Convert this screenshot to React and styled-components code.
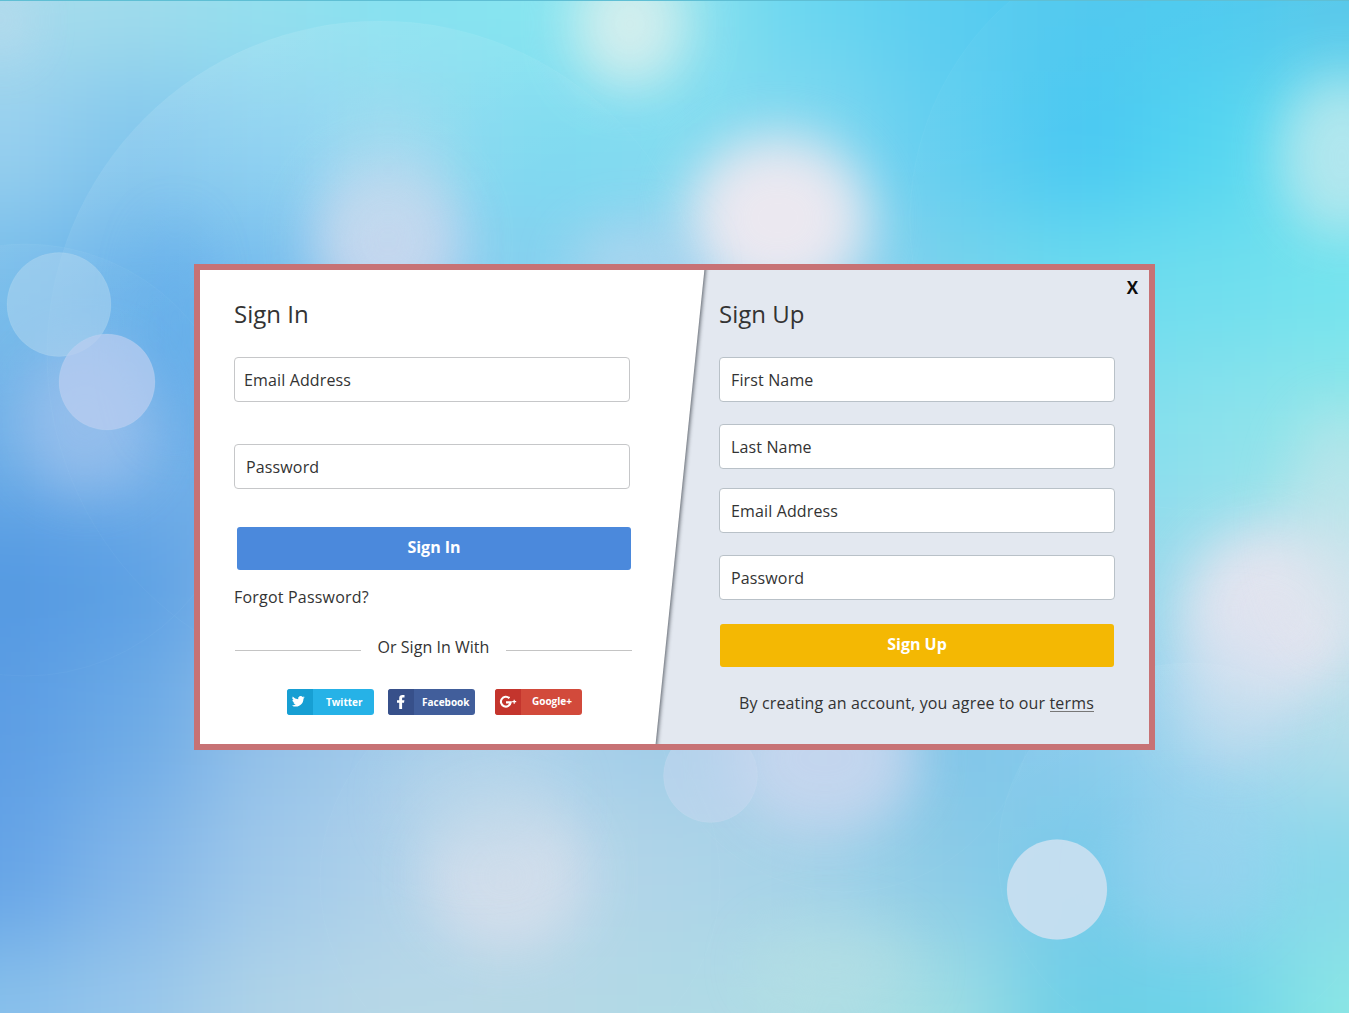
import React from "react";
import styled, { createGlobalStyle } from "styled-components";

const GlobalStyle = createGlobalStyle`
  * { box-sizing: border-box; }
  body {
    margin: 0;
    font-family: "Open Sans", "Noto Sans", sans-serif;
    font-size: 16px;
    line-height: 22px;
    color: #333;
  }
`;

const Page = styled.main`
  position: relative;
  height: 1013px;
  padding: 264px 0 0 194px;
  overflow: hidden;
  background: #8cccec;
`;

const Backdrop = styled.svg`
  position: absolute;
  left: 0;
  top: 0;
  width: 1349px;
  height: 1013px;
`;

const Card = styled.section`
  position: relative;
  display: flex;
  width: 961px;
  height: 486px;
  border: 6px solid #c77275;
  background: #e3e8f0;
  overflow: hidden;
`;

const SignInPane = styled.form`
  position: relative;
  display: flex;
  flex-direction: column;
  width: 505px;
  padding: 28px 73px 0 34px;
`;

const SlantShadow = styled.div`
  position: absolute;
  inset: 0;
  filter: drop-shadow(1px 0 2px rgba(38, 44, 52, 0.8));

  &::before {
    content: "";
    position: absolute;
    inset: -6px 0 -6px -6px;
    background: #fff;
    clip-path: polygon(0 0, 100% 0, 461px 100%, 0 100%);
  }
`;

const SignUpPane = styled.form`
  position: relative;
  display: flex;
  flex-direction: column;
  width: 444px;
  padding: 28px 34px 0 14px;
`;

const Title = styled.h1`
  position: relative;
  margin: 0 0 27px;
  font-size: 24px;
  font-weight: 400;
  line-height: 32px;
`;

const Field = styled.input`
  position: relative;
  width: 396px;
  height: 45px;
  flex: none;
  margin: 0 0 ${(p) => p.$gap}px;
  padding: 0 10px 0 ${(p) => p.$inset || 11}px;
  border: 1px solid ${(p) => p.$line || "#b9c1c8"};
  border-radius: 4px;
  background: #fff;
  font: inherit;
  letter-spacing: 0.14px;
  color: #333;
  outline: none;

  &::placeholder {
    color: #333;
    opacity: 1;
  }
`;

const Submit = styled.button`
  position: relative;
  flex: none;
  width: 394px;
  height: 43px;
  margin: 0 0 ${(p) => p.$gap}px ${(p) => p.$shift}px;
  padding: 0 0 3px;
  border: 0;
  border-radius: 3px;
  background: ${(p) => p.$tone};
  color: #fff;
  font: inherit;
  font-weight: 700;
`;

const Forgot = styled.a`
  position: relative;
  letter-spacing: 0.2px;
  color: #333;
`;

const Divider = styled.div`
  position: relative;
  display: flex;
  align-items: center;
  justify-content: space-between;
  width: 397px;
  margin: 28px 0 31px 1px;
  line-height: 22px;
  letter-spacing: 0.03px;

  &::before,
  &::after {
    content: "";
    width: 126px;
    height: 1px;
    margin-top: 7px;
    background: #c4c4c4;
  }
`;

const SocialRow = styled.div`
  position: relative;
  display: flex;
  padding-left: 53px;
`;

const SocialButton = styled.button`
  display: flex;
  width: 87px;
  height: 26px;
  margin-right: ${(p) => p.$gap || 0}px;
  padding: 0;
  border: 0;
  border-radius: 3px;
  overflow: hidden;
  background: ${(p) => p.$tone};
  color: #fff;
  font: 700 10px/26px "Open Sans", sans-serif;
`;

const SocialIcon = styled.span`
  display: flex;
  width: 26px;
  height: 26px;
  flex: none;
  background: ${(p) => p.$tone};
`;

const SocialLabel = styled.span`
  flex: 1;
  padding-left: ${(p) => p.$inset}px;
  text-align: left;
  line-height: ${(p) => p.$line || 26}px;
`;

const Terms = styled.p`
  margin: 0 0 0 20px;
  letter-spacing: 0.14px;
  white-space: nowrap;
`;

const TermsLink = styled.a`
  display: inline-block;
  height: 20px;
  border-bottom: 1px solid #777;
  color: #333;
`;

const Close = styled.button`
  position: absolute;
  top: 7px;
  right: 11px;
  padding: 0;
  border: 0;
  background: none;
  color: #0c0c0c;
  font: 700 17px/22px "Open Sans", sans-serif;
`;

/* Rows of colour samples, blended into one soft field. */
const FIELD = [
  ["#a9dbec", "#a0dcec", "#94e0ee", "#86e2f0", "#88e6f0", "#8fe2ee", "#68d6f0", "#5acdf0", "#4ec8ef", "#4dc9ef", "#57c7ea"],
  ["#98d0ee", "#82c6ed", "#8ad0f0", "#90d8ef", "#7edaf0", "#82dcf0", "#84d8f0", "#62cef0", "#48c8f2", "#54d6f0", "#7ee0ee"],
  ["#76bcea", "#66b0ea", "#74bbed", "#90caf0", "#84d0ef", "#98d0f0", "#a0d2f0", "#78d2ec", "#6cdcee", "#70deee", "#74e4ee"],
  ["#70b0e8", "#7eb6ea", "#5ea8e6", "#80bcea", "#90cdf0", "#a2d2f0", "#b0d8f0", "#82d6ec", "#7edcee", "#8ce2ec", "#96e6e8"],
  ["#5499e2", "#5ca0e4", "#7eb4e8", "#90c0ea", "#a0caea", "#a2d2f0", "#b0d0f0", "#82c6ec", "#8ed6ec", "#a4dcec", "#c4e2ea"],
  ["#5c9de4", "#6caae6", "#94c1e9", "#a2cbea", "#a8d0ea", "#a0cce8", "#aacfea", "#80c5e8", "#88caec", "#a6d6ee", "#b6deea"],
  ["#64a3e7", "#82b6e9", "#a0c9ea", "#b0d2ea", "#b8d6e9", "#aed4e8", "#a4d2e8", "#8ccbe7", "#78caea", "#90d3ee", "#86d8ea"],
  ["#88c0eb", "#98c7eb", "#b0d4e8", "#b8d8e7", "#b6d8e6", "#b0dae6", "#b0dee5", "#a0dee4", "#6ccfe7", "#6cd4e8", "#8ce7e5"],
];

const GLOWS = [
  [630, 24, 56, 64, "#d6efee", 0.95],
  [388, 240, 72, 76, "#cad8ee", 0.92],
  [388, 170, 60, 70, "#b4dcef", 0.3],
  [778, 218, 90, 82, "#ebe8f0", 1],
  [630, 265, 60, 40, "#b8d8ee", 0.6],
  [1342, 157, 60, 78, "#b8e8ee", 0.9],
  [85, 420, 66, 72, "#a2c3ed", 0.65],
  [1272, 612, 88, 84, "#e8e5f0", 0.9],
  [1235, 690, 60, 70, "#d3e0f0", 0.55],
  [1340, 520, 50, 110, "#cee5ec", 0.5],
  [505, 876, 80, 76, "#d6dfec", 0.85],
  [480, 800, 80, 60, "#bcd8ea", 0.5],
  [825, 758, 92, 74, "#c8d7ef", 0.88],
  [835, 965, 80, 40, "#b8e0e3", 0.5],
  [1190, 870, 80, 70, "#9cd2ef", 0.35],
  [175, 330, 30, 110, "#59a7e8", 0.35],
  [0, 20, 22, 35, "#cbdcee", 0.6],
];

const DISCS = [
  [59, 304.5, 52, "#b4d8f0", 0.5],
  [107, 382, 48, "#bacdf0", 0.72],
  [710.5, 775.5, 47, "#c7d7ef", 0.5],
  [1057, 889.5, 50, "#d1e1f1", 0.84],
];

const ARCS = [
  [380, 354, 333, 0.12],
  [1200, 220, 290, 0.03],
  [845, 705, 187, 0.03],
  [1190, 855, 192, 0.05],
  [25, 460, 216, 0.05],
  [520, 880, 200, 0.02],
];

function Scene() {
  return (
    <Backdrop viewBox="0 0 1349 1013" aria-hidden="true">
      <defs>
        <filter id="field" filterUnits="userSpaceOnUse" x="-300" y="-300" width="1950" height="1650" colorInterpolationFilters="sRGB">
          <feGaussianBlur stdDeviation="48" />
        </filter>
        <filter id="glow" x="-120%" y="-120%" width="340%" height="340%" colorInterpolationFilters="sRGB">
          <feGaussianBlur stdDeviation="26" />
        </filter>
        <linearGradient id="arc" x1="0.2" y1="0.05" x2="0.36" y2="0.42">
          <stop offset="0" stopColor="#fff" stopOpacity="1" />
          <stop offset="1" stopColor="#fff" stopOpacity="0" />
        </linearGradient>
      </defs>
      <g filter="url(#field)">
        {FIELD.map((row, r) =>
          row.map((color, c) => {
            const left = c === 0 ? -300 : c * 135 - 68;
            const right = c === 10 ? 1650 : c * 135 + 68;
            const top = r === 0 ? -300 : r * 145 - 73;
            const bottom = r === 7 ? 1350 : r * 145 + 73;
            return <rect key={`${r}-${c}`} x={left} y={top} width={right - left} height={bottom - top} fill={color} />;
          })
        )}
      </g>
      {GLOWS.map(([x, y, rx, ry, color, opacity]) => (
        <ellipse key={`${x}-${y}`} cx={x} cy={y} rx={rx} ry={ry} fill={color} opacity={opacity} filter="url(#glow)" />
      ))}
      {ARCS.map(([x, y, r, opacity]) => (
        <circle key={`${x}-${y}`} cx={x} cy={y} r={r} fill="url(#arc)" fillOpacity={opacity} stroke="#d8f4f8" strokeOpacity="0.035" />
      ))}
      {DISCS.map(([x, y, r, color, opacity]) => (
        <circle key={`${x}-${y}`} cx={x} cy={y} r={r} fill={color} fillOpacity={opacity} stroke="#dcebf6" strokeOpacity="0.1" />
      ))}
      <rect width="1349" height="1" fill="#5fbfd4" />
    </Backdrop>
  );
}

const TwitterGlyph = () => (
  <svg width="26" height="26" viewBox="0 0 26 26">
    <path
      transform="translate(4.8 7) scale(.54)"
      fill="#fff"
      d="M23.95 2.4a9.8 9.8 0 0 1-2.83.78 4.93 4.93 0 0 0 2.17-2.73 9.9 9.9 0 0 1-3.13 1.2 4.92 4.92 0 0 0-8.38 4.48A13.97 13.97 0 0 1 1.64.99a4.93 4.93 0 0 0 1.52 6.57 4.9 4.9 0 0 1-2.23-.62v.06a4.93 4.93 0 0 0 3.95 4.83 4.9 4.9 0 0 1-2.22.08 4.93 4.93 0 0 0 4.6 3.42A9.88 9.88 0 0 1 0 17.37a13.94 13.94 0 0 0 7.55 2.21c9.05 0 14-7.5 14-14l-.02-.63a10 10 0 0 0 2.42-2.55z"
    />
  </svg>
);

const FacebookGlyph = () => (
  <svg width="26" height="26" viewBox="0 0 26 26">
    <path fill="#fff" d="M11.2 20v-6.2H9v-2.6h2.2V9.3c0-2.2 1.2-3.3 3.3-3.3h2v2.5h-1.3c-.9 0-1.1.4-1.1 1.1v1.6h2.3l-.4 2.6h-1.9V20z" />
  </svg>
);

const GoogleGlyph = () => (
  <svg width="26" height="26" viewBox="0 0 26 26" fill="none" stroke="#fff">
    <path strokeWidth="2.1" d="M14.4 9.3A4.9 4.9 0 1 0 15.7 13.4h-4.7" />
    <path strokeWidth="1.2" d="M19.2 10.7v4M17.2 12.7h4" />
  </svg>
);

export default function App() {
  return (
    <>
      <GlobalStyle />
      <Page>
        <Scene />
        <Card>
          <SignInPane>
            <SlantShadow />
            <Title>Sign In</Title>
            <Field placeholder="Email Address" $gap={42} $inset={9} $line="#c6c7c9" />
            <Field placeholder="Password" type="password" $gap={38} $inset={11} $line="#c6c7c9" />
            <Submit type="button" $tone="#4b89dc" $gap={16} $shift={3}>Sign In</Submit>
            <Forgot>Forgot Password?</Forgot>
            <Divider>Or Sign In With</Divider>
            <SocialRow>
              <SocialButton type="button" $tone="#26b2e7" $gap={14}>
                <SocialIcon $tone="#179fd3"><TwitterGlyph /></SocialIcon>
                <SocialLabel $inset={13}>Twitter</SocialLabel>
              </SocialButton>
              <SocialButton type="button" $tone="#415e9b" $gap={20}>
                <SocialIcon $tone="#37508a"><FacebookGlyph /></SocialIcon>
                <SocialLabel $inset={8}>Facebook</SocialLabel>
              </SocialButton>
              <SocialButton type="button" $tone="#d24a3b">
                <SocialIcon $tone="#c4352d"><GoogleGlyph /></SocialIcon>
                <SocialLabel $inset={11} $line={25}>Google+</SocialLabel>
              </SocialButton>
            </SocialRow>
          </SignInPane>
          <SignUpPane>
            <Title>Sign Up</Title>
            <Field placeholder="First Name" $gap={22} />
            <Field placeholder="Last Name" $gap={19} />
            <Field placeholder="Email Address" $gap={22} />
            <Field placeholder="Password" type="password" $gap={24} />
            <Submit type="button" $tone="#f4b803" $gap={25} $shift={1}>Sign Up</Submit>
            <Terms>
              By creating an account, you agree to our <TermsLink>terms</TermsLink>
            </Terms>
          </SignUpPane>
          <Close type="button">X</Close>
        </Card>
      </Page>
    </>
  );
}
